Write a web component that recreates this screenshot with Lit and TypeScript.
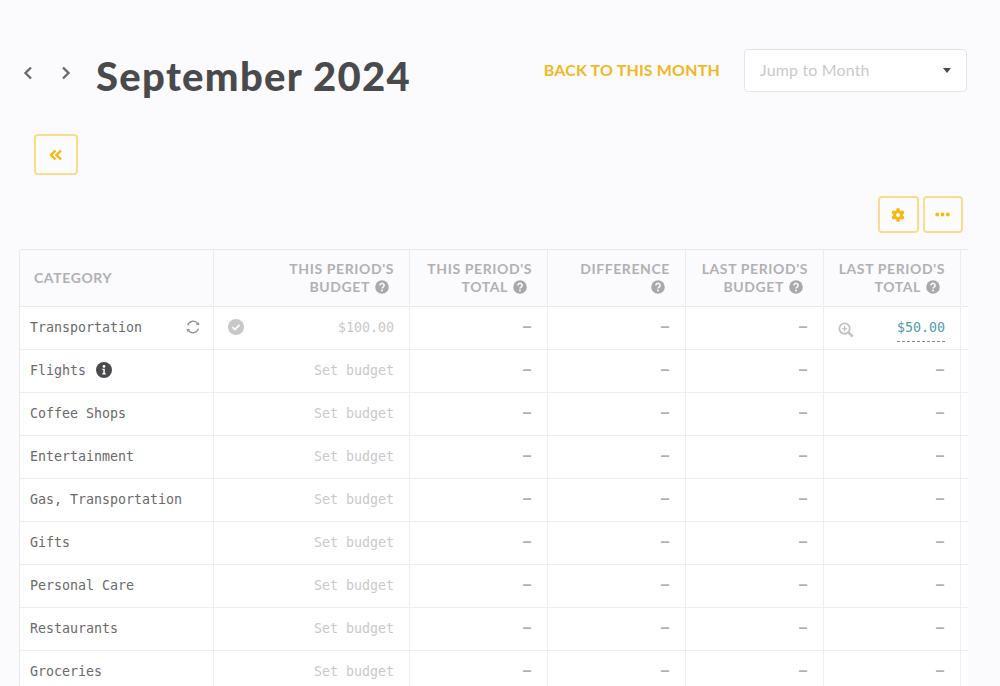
import { LitElement, html, css, svg } from "lit";
import { customElement } from "lit/decorators.js";

const CATS = ["Flights", "Coffee Shops", "Entertainment", "Gas, Transportation", "Gifts", "Personal Care", "Restaurants", "Groceries"];

const help = html`<svg class="help" viewBox="0 0 14 14"><circle cx="7" cy="7" r="6.8" fill="#a9a9a9"/><path d="M4.9 5.4a2.1 2 0 1 1 3.2 1.7c-.7.45-1.1.8-1.1 1.5" fill="none" stroke="#fafafc" stroke-width="1.6"/><circle cx="7" cy="10.6" r="1" fill="#fafafc"/></svg>`;

@customElement("app-root")
export class AppRoot extends LitElement {
  static styles = css`
    :host { display: block; height: 686px; overflow: hidden; background: #fbfafd; font-family: "Lato", sans-serif; }
    .top { display: flex; align-items: center; height: 43px; padding: 49px 33px 0 20px; }
    .nav { display: flex; gap: 22px; margin-top: 4px; }
    .nav svg { width: 16px; height: 16px; display: block; }
    h1 { margin: 11px 0 0 22px; font-size: 40px; line-height: 43px; font-weight: 900; color: #4a4a4d; letter-spacing: 1.3px; white-space: nowrap; }
    .back { margin-left: auto; margin-top: -3px; font-size: 16px; font-weight: 700; color: #f2b824; letter-spacing: 0.17px; white-space: nowrap; }
    .select { display: flex; align-items: center; justify-content: space-between; box-sizing: border-box; width: 223px; height: 43px; margin-left: 24px; padding: 0 15px 3px 15px; background: #fff; border: 1px solid #e6e6e9; border-radius: 4px; color: #cacacc; font-size: 16px; letter-spacing: 0.15px; }
    .caret { width: 0; height: 0; margin-top: 3px; border-left: 4px solid transparent; border-right: 4px solid transparent; border-top: 5px solid #4a4a4d; }
    .btn { display: flex; align-items: center; justify-content: center; box-sizing: border-box; border: 2px solid #fcdc8c; border-radius: 4px; background: #fdfcfd; }
    .collapse { width: 44px; height: 41px; margin: 42px 0 0 34px; }
    .tools { display: flex; justify-content: flex-end; gap: 4px; margin-top: 21px; padding-right: 37px; }
    .tools .btn { width: 40.5px; height: 37px; }
    .wrap { width: 948px; margin: 16px 0 0 19px; overflow: hidden; border-top: 1px solid #e8e8eb; border-left: 1px solid #e8e8eb; border-top-left-radius: 4px; }
    .row { display: grid; grid-template-columns: 194px 196px 138px 138px 138px 137px 6px; height: 43px; box-sizing: border-box; border-bottom: 1px solid #eeeef1; background: #fff; }
    .head { height: 57px; padding-bottom: 1px; background: #fbfafc; border-bottom: 1px solid #eaeaed; }
    .th { display: flex; flex-direction: column; justify-content: center; align-items: flex-end; padding-right: 15px; border-right: 1px solid #ebebee; font-size: 14px; line-height: 18px; font-weight: 700; color: #b1b1b3; letter-spacing: 0.6px; white-space: nowrap; }
    .th.cat { align-items: flex-start; padding-left: 14px; padding-right: 0; }
    .th span { display: flex; align-items: center; gap: 5px; min-height: 18px; }
    .th span.second { padding-right: 5px; }
    .help { width: 14px; height: 14px; flex: none; }
    .td { display: flex; align-items: center; justify-content: flex-end; gap: 8px; padding: 0 15px 2px 10px; border-right: 1px solid #eeeef1; font-family: "DejaVu Sans Mono", monospace; font-size: 13.3px; color: #c4c4c6; white-space: nowrap; }
    .td.name { justify-content: flex-start; color: #6a6a6c; padding-right: 12px; gap: 10px; }
    .td.dash { color: #b0b0b3; padding: 0 16px 4px 10px; font-weight: 700; }
    .td.dash.filled { padding: 0 15px 2px 10px; font-weight: 400; }
    .grow { flex: 1; }
    .ico { flex: none; display: block; }
    .ico.check { margin-left: 4px; }
    .ico.zoom { margin: 6px 0 0 4px; }
    .amount { color: #4f9cab; border-bottom: 1px dashed #8a8a8d; line-height: 20px; margin-top: 5px; padding-bottom: 3px; }
    .budget { color: #c9c9cb; }
  `;

  private row(name: unknown, budget: unknown, last?: unknown) {
    return html`<div class="row">
      <div class="td name">${name}</div>
      <div class="td budget">${budget}</div>
      <div class="td dash">–</div>
      <div class="td dash">–</div>
      <div class="td dash">–</div>
      ${last ? html`<div class="td dash filled">${last}</div>` : html`<div class="td dash">–</div>`}
      <div></div>
    </div>`;
  }

  private th(a: string, b: string) {
    return html`<div class="th"><span>${a}</span><span class="second">${b}${help}</span></div>`;
  }

  render() {
    const gear = svg`<circle cx="7" cy="7" r="4.8" fill="#f6b90f"/><circle cx="7" cy="2" r="1.9" fill="#f6b90f"/><circle cx="7" cy="12" r="1.9" fill="#f6b90f"/><circle cx="2.7" cy="4.5" r="1.9" fill="#f6b90f"/><circle cx="11.3" cy="4.5" r="1.9" fill="#f6b90f"/><circle cx="2.7" cy="9.5" r="1.9" fill="#f6b90f"/><circle cx="11.3" cy="9.5" r="1.9" fill="#f6b90f"/><circle cx="7" cy="7" r="2" fill="#fdfcfd"/>`;
    return html`
      <div class="top">
        <div class="nav">
          <svg viewBox="0 0 16 16"><path d="M11 2.5L5.5 8l5.5 5.5" fill="none" stroke="#6b6b6e" stroke-width="2.4"/></svg>
          <svg viewBox="0 0 16 16"><path d="M5 2.5L10.5 8 5 13.5" fill="none" stroke="#6b6b6e" stroke-width="2.4"/></svg>
        </div>
        <h1>September 2024</h1>
        <div class="back">BACK TO THIS MONTH</div>
        <div class="select"><span>Jump to Month</span><i class="caret"></i></div>
      </div>
      <div class="btn collapse">
        <svg width="14" height="12" viewBox="0 0 14 12"><path d="M6.5 1.5L2 6l4.5 4.5M12 1.5L7.5 6l4.5 4.5" fill="none" stroke="#f6b90f" stroke-width="2.4"/></svg>
      </div>
      <div class="tools">
        <div class="btn"><svg width="14" height="14" viewBox="0 0 14 14">${gear}</svg></div>
        <div class="btn"><svg width="15" height="5" viewBox="0 0 15 5"><circle cx="2.2" cy="2.5" r="1.9" fill="#f6b90f"/><circle cx="7.5" cy="2.5" r="1.9" fill="#f6b90f"/><circle cx="12.8" cy="2.5" r="1.9" fill="#f6b90f"/></svg></div>
      </div>
      <div class="wrap">
        <div class="row head">
          <div class="th cat">CATEGORY</div>
          ${this.th("THIS PERIOD'S", "BUDGET")}
          ${this.th("THIS PERIOD'S", "TOTAL")}
          <div class="th"><span>DIFFERENCE</span><span class="second">${help}</span></div>
          ${this.th("LAST PERIOD'S", "BUDGET")}
          ${this.th("LAST PERIOD'S", "TOTAL")}
          <div></div>
        </div>
        ${this.row(
          html`Transportation<span class="grow"></span>
            <svg class="ico" width="16" height="16" viewBox="0 0 16 16"><path d="M2.6 6.4A5.6 5.6 0 0 1 12.6 4.6M13.4 9.6A5.6 5.6 0 0 1 3.4 11.4" fill="none" stroke="#8a8a8d" stroke-width="1.2"/><path d="M14.6 5.8l-3.6.2 2.2-3zM1.4 10.2l3.6-.2-2.2 3z" fill="#8a8a8d"/></svg>`,
          html`<svg class="ico check" width="16" height="16" viewBox="0 0 16 16"><circle cx="8" cy="8" r="8" fill="#c8c8ca"/><path d="M4.4 8.2l2.5 2.4 4.6-4.8" fill="none" stroke="#fff" stroke-width="1.8"/></svg><span class="grow"></span>$100.00`,
          html`<svg class="ico zoom" width="16" height="16" viewBox="0 0 17 17"><circle cx="7" cy="7" r="5.5" fill="none" stroke="#c4c4c6" stroke-width="2"/><path d="M11 11l4.6 4.6" stroke="#c4c4c6" stroke-width="2.8"/><path d="M7 4.3v5.4M4.3 7h5.4" stroke="#c4c4c6" stroke-width="1.4"/></svg><span class="grow"></span><span class="amount">$50.00</span>`
        )}
        ${CATS.map((c) =>
          this.row(
            c === "Flights"
              ? html`${c}<svg class="ico" width="16" height="16" viewBox="0 0 16 16"><circle cx="8" cy="8" r="8" fill="#4a4a4d"/><circle cx="8" cy="4.4" r="1.3" fill="#fff"/><path d="M6.3 6.8h2.5v4.4h1v1.2H6.3v-1.2h1V8H6.3z" fill="#fff"/></svg>`
              : c,
            "Set budget"
          )
        )}
      </div>
    `;
  }
}
